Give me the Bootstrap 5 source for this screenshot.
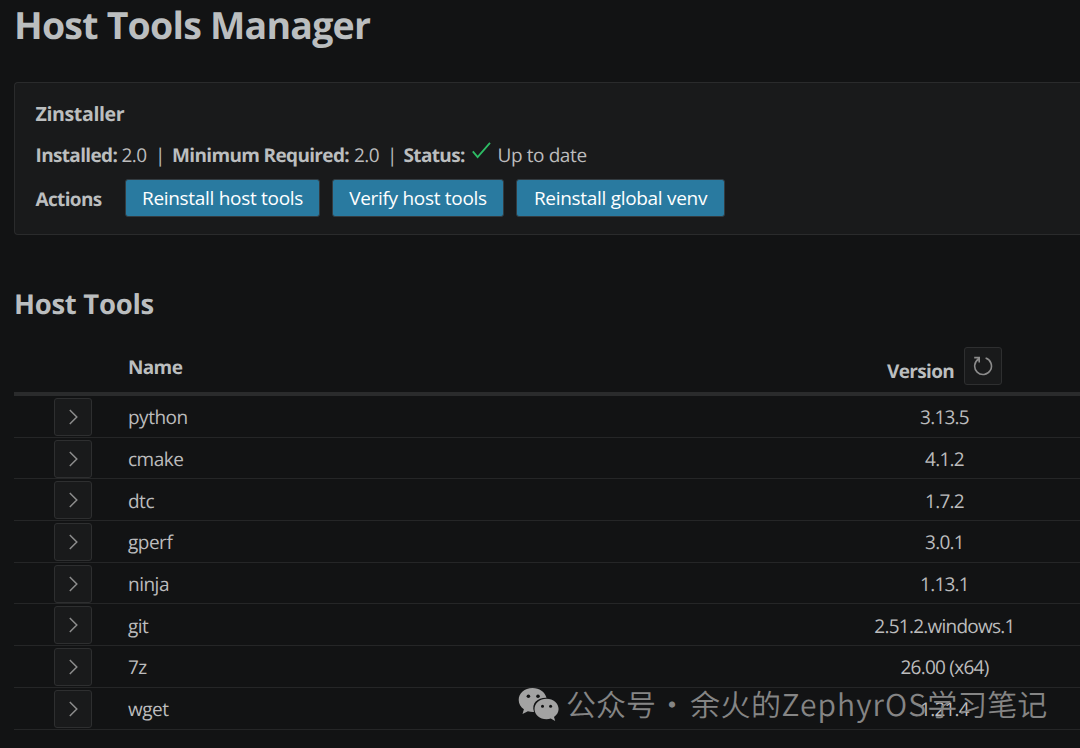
<!DOCTYPE html>
<html lang="en" data-bs-theme="dark">
<head>
<meta charset="utf-8">
<meta name="viewport" content="width=device-width, initial-scale=1">
<title>Host Tools Manager</title>
<link href="https://cdn.jsdelivr.net/npm/bootstrap@5.3.0/dist/css/bootstrap.min.css" rel="stylesheet">
<style>
body{background:#121314;color:#bcbcbd;font-family:"Open Sans","Noto Sans CJK SC",sans-serif;font-size:19px;line-height:26px;letter-spacing:-.5px;height:748px;overflow:hidden;text-rendering:geometricPrecision}
h1,h2,h3{color:#bbbebf;font-weight:700;margin:0;white-space:nowrap}
h1{font-size:37.5px;line-height:50px;letter-spacing:-.78px}
h2{font-size:27.5px;line-height:36px;letter-spacing:-.3px}
h3{font-size:19.6px;line-height:26px;letter-spacing:-.4px}
b,th{font-weight:700;color:#bbbebf;letter-spacing:-.65px}
.page{padding-left:14px}
.panel{height:153px;margin-top:32px;background:#191a1b;border:1px solid #2a2b2c;border-right:0;border-radius:4px 0 0 4px;padding:18px 0 0 20.5px}
.info{margin-top:15px;white-space:pre;height:26px}
.info span,.info b{display:block}
.btn-act{height:38px;padding:0;background:#297aa0;border:1px solid #333b40;border-radius:3px;color:#fff;font-size:19px;line-height:36px;letter-spacing:-.3px;white-space:nowrap}
.btn-sq{width:38px;height:38px;padding:0;background:#191a1b;border:1px solid #2e2f30;border-radius:3px;color:#8c8c8c}
.tools{margin-top:15px;width:1066px;table-layout:fixed;border-collapse:separate;border-spacing:0}
.tools td,.tools th{padding:0;vertical-align:middle}
.tools thead th{height:58px;padding-top:2px;border-bottom:4px solid #2a2b2c}
.tools tbody td{height:41.7px;padding-top:2px;border-bottom:1px solid #252627}
.ver{text-align:center}
.tools td.ver{letter-spacing:-.75px}
.wm{position:absolute;left:518px;top:681px;color:#858585;white-space:nowrap;letter-spacing:0;font:350 30px/44px "Noto Sans CJK SC DemiLight","Noto Sans CJK SC",sans-serif}
</style>
</head>
<body>
<main class="page">
<h1>Host Tools Manager</h1>
<section class="panel">
<h3>Zinstaller</h3>
<div class="info d-flex"><b style="width:86px">Installed:</b><span style="width:33.500px">2.0</span><span style="width:17px">|</span><b style="width:182px">Minimum Required:</b><span style="width:33px">2.0</span><span style="width:16.500px">|</span><b style="width:68px">Status:</b><svg width="26" height="26" viewBox="0 0 26 26" fill="none" stroke="#2dbd65" stroke-width="1.8"><path d="M.8 9.300 5.600 15 18 .8"/></svg><span style="letter-spacing:-.4px">Up to date</span></div>
<div class="d-flex align-items-center" style="margin-top:11px"><b style="width:89.500px;padding-top:2px">Actions</b><button class="btn-act" style="width:195px">Reinstall host tools</button><button class="btn-act" style="width:172px;margin-left:12px">Verify host tools</button><button class="btn-act" style="width:209px;margin-left:12px">Reinstall global venv</button></div>
</section>
<h2 style="margin-top:52px">Host Tools</h2>
<table class="tools">
<colgroup><col style="width:114px"><col><col style="width:271px"></colgroup>
<thead><tr><th></th><th style="padding-top:3px">Name</th><th class="ver"><div class="d-flex justify-content-center"><span style="width:77px;padding-top:11px;text-align:left">Version</span><button class="btn-sq d-block" aria-label="Refresh"><svg class="d-block mx-auto" width="20" height="20" viewBox="0 0 20 20" fill="none" stroke="currentColor" stroke-width="1.6"><path d="M12.600 2.100A8.400 8.400 0 1 1 5.600 3M1.200 1.600h5v5"/></svg></button></div></th></tr></thead>
<tbody id="rows"></tbody>
</table>
</main>
<div class="wm d-flex"><svg width="41" height="36" viewBox="0 0 41 36" style="margin:6px 7px 0 0"><path fill="#a3a3a3" d="M14.500 1C6.500 1 .7 6.200.7 13c0 4 2 7.200 5.200 9.300L4.500 27l5.400-2.800c2 .6 4 .8 6.100.7C13 16 20 10.500 28.500 10.800 27 4.800 21.300 1 14.500 1z"/><path fill="#a3a3a3" d="M28.500 11.800c-6.800 0-12 4.500-12 10.300s5.200 10.200 12 10.200c1.500 0 3-.2 4.300-.7l4.400 2.500-1.200-4c2.900-2 4.600-4.800 4.600-8 0-5.800-5.200-10.300-12.100-10.300z"/><g fill="#121314"><circle cx="10.400" cy="9.200" r="1.800"/><circle cx="20" cy="9.200" r="1.800"/><circle cx="24.500" cy="19.200" r="1.500"/><circle cx="32.600" cy="19.200" r="1.500"/></g></svg><span style="width:91px">公众号</span><span style="width:33px">·</span><span style="letter-spacing:.5px">余火的<span style="letter-spacing:1.100px">ZephyrOS</span><span style="letter-spacing:0">学习笔记</span></span></div>
<script>
const tools=[["python","3.13.5"],["cmake","4.1.2"],["dtc","1.7.2"],["gperf","3.0.1"],["ninja","1.13.1"],["git","2.51.2.windows.1"],["7z","26.00 (x64)"],["wget","1.21.4"]];
document.getElementById("rows").innerHTML=tools.map(([n,v])=>`<tr><td style="padding-top:1px"><button class="btn-sq d-block" style="margin-left:40px" aria-label="Expand"><svg class="d-block mx-auto" width="10" height="16" viewBox="0 0 10 16" fill="none" stroke="currentColor" stroke-width="1.5"><path d="m1.800 1 7 7-7 7"/></svg></button></td><td>${n}</td><td class="ver">${v}</td></tr>`).join("");
</script>
<script src="https://cdn.jsdelivr.net/npm/bootstrap@5.3.0/dist/js/bootstrap.bundle.min.js"></script>
</body>
</html>
